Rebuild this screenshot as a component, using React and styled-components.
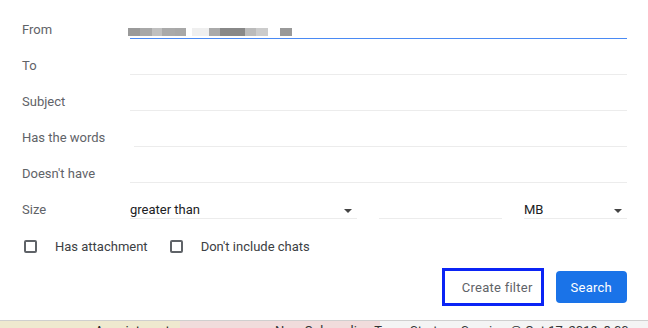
import React from "react";
import styled, { createGlobalStyle } from "styled-components";

const Global = createGlobalStyle`
  html, body { margin: 0; padding: 0; background: #fff; }
  body { font-family: Roboto, "Liberation Sans", Arial, sans-serif; width: 648px; height: 328px; overflow: hidden; }
`;

const Page = styled.div`
  width: 648px;
  height: 328px;
  display: flex;
  flex-direction: column;
  overflow: hidden;
`;

const Dialog = styled.div`
  height: 321px;
  box-sizing: border-box;
  padding: 12px 21px 0 22px;
  background: #fff;
  border-bottom: 1px solid #cfcfcf;
`;

const Row = styled.div`
  display: grid;
  grid-template-columns: 108px 1fr;
  align-items: center;
  height: 36px;
`;

const Label = styled.div`
  font-size: 13px;
  color: #5f6368;
  line-height: 16px;
`;

const Field = styled.div`
  height: 18px;
  box-sizing: border-box;
  margin-left: ${(p) => p.$indent || 0}px;
  border-bottom: 1px solid ${(p) => (p.$active ? "#4a8af4" : "#ececec")};
  display: flex;
  align-items: flex-start;
`;

const Redacted = styled.div`
  display: flex;
  height: 8px;
  margin-top: 7px;
  margin-left: -2px;
`;

const Blur = styled.span`
  display: block;
  width: ${(p) => p.$w}px;
  height: 100%;
  background: ${(p) => p.$c};
`;

const SizeRow = styled.div`
  display: grid;
  grid-template-columns: 227px 123px 103px;
  justify-content: space-between;
  align-items: center;
`;

const Select = styled.div`
  height: 18px;
  box-sizing: border-box;
  border-bottom: 1px solid #ececec;
  display: flex;
  align-items: flex-start;
  justify-content: space-between;
  font-size: 13px;
  color: #202124;
  line-height: 17px;
  padding-right: 5px;
`;

const Caret = styled.span`
  width: 0;
  height: 0;
  margin-top: 8px;
  border-left: 4px solid transparent;
  border-right: 4px solid transparent;
  border-top: 4px solid #444;
`;

const Checks = styled.div`
  display: flex;
  align-items: center;
  height: 36px;
`;

const Check = styled.label`
  display: flex;
  align-items: center;
  font-size: 13px;
  color: #3c4043;
  margin-right: ${(p) => p.$mr || 0}px;
`;

const Box = styled.span`
  width: 13px;
  height: 13px;
  box-sizing: border-box;
  border: 2px solid #5f6368;
  border-radius: 2px;
  margin-left: 2px;
  margin-right: 18px;
`;

const Actions = styled.div`
  display: flex;
  justify-content: flex-end;
  align-items: center;
  margin-top: 7px;
  gap: 15px;
`;

const Button = styled.button`
  height: 32px;
  box-sizing: border-box;
  border: none;
  font-family: Roboto, "Liberation Sans", Arial, sans-serif;
  font-size: 13px;
  font-weight: 400;
  letter-spacing: 0.25px;
  padding: ${(p) => (p.$primary ? "0 15px" : "0 8px 0 17px")};
  background: ${(p) => (p.$primary ? "#1a73e8" : "#fff")};
  color: ${(p) => (p.$primary ? "#fff" : "#5f6368")};
  outline: ${(p) => (p.$focus ? "3px solid #0b24f5" : "none")};
  outline-offset: 0;
  border-radius: ${(p) => (p.$focus ? 0 : 4)}px;
`;

const Behind = styled.div`
  flex: 1;
  position: relative;
  display: flex;
  overflow: hidden;
`;

const Band = styled.div`
  width: ${(p) => p.$w}px;
  flex: ${(p) => (p.$w ? "none" : 1)};
  background: ${(p) => p.$bg};
`;

const Ghost = styled.span`
  position: absolute;
  top: 3px;
  left: ${(p) => p.$x}px;
  font-size: 13px;
  line-height: 14px;
  color: ${(p) => p.$c || "#222"};
  white-space: nowrap;
`;

const blurs = [
  [12, "#9a9a9a"], [12, "#a8a8a8"], [10, "#c0c0c0"], [13, "#aaaaaa"], [11, "#a8a8a8"],
  [6, "#ffffff"], [17, "#efefef"], [11, "#aaaaaa"], [25, "#888888"], [11, "#bbbbbb"],
  [12, "#cccccc"], [12, "#ffffff"], [12, "#999999"],
];

export default function App() {
  return (
    <Page>
      <Global />
      <Dialog>
        <Row>
          <Label>From</Label>
          <Field $active>
            <Redacted>
              {blurs.map(([w, c], i) => (
                <Blur key={i} $w={w} $c={c} />
              ))}
            </Redacted>
          </Field>
        </Row>
        <Row>
          <Label>To</Label>
          <Field />
        </Row>
        <Row>
          <Label>Subject</Label>
          <Field />
        </Row>
        <Row>
          <Label>Has the words</Label>
          <Field $indent={4} />
        </Row>
        <Row>
          <Label>Doesn't have</Label>
          <Field />
        </Row>
        <Row>
          <Label>Size</Label>
          <SizeRow>
            <Select>
              greater than
              <Caret />
            </Select>
            <Select />
            <Select>
              MB
              <Caret />
            </Select>
          </SizeRow>
        </Row>
        <Checks>
          <Check $mr={20}>
            <Box />
            Has attachment
          </Check>
          <Check>
            <Box />
            Don't include chats
          </Check>
        </Checks>
        <Actions>
          <Button $focus>Create filter</Button>
          <Button $primary>Search</Button>
        </Actions>
      </Dialog>
      <Behind>
        <Band $w={180} $bg="#efe9cf" />
        <Band $w={200} $bg="#f1dcdc" />
        <Band $bg="#f4f4f4" />
        <Ghost $x={95}>Appointment</Ghost>
        <Ghost $x={275} $c="#333">New Onboarding Team Strategy Session @ Oct 17, 2019, 8:00 am</Ghost>
      </Behind>
    </Page>
  );
}
